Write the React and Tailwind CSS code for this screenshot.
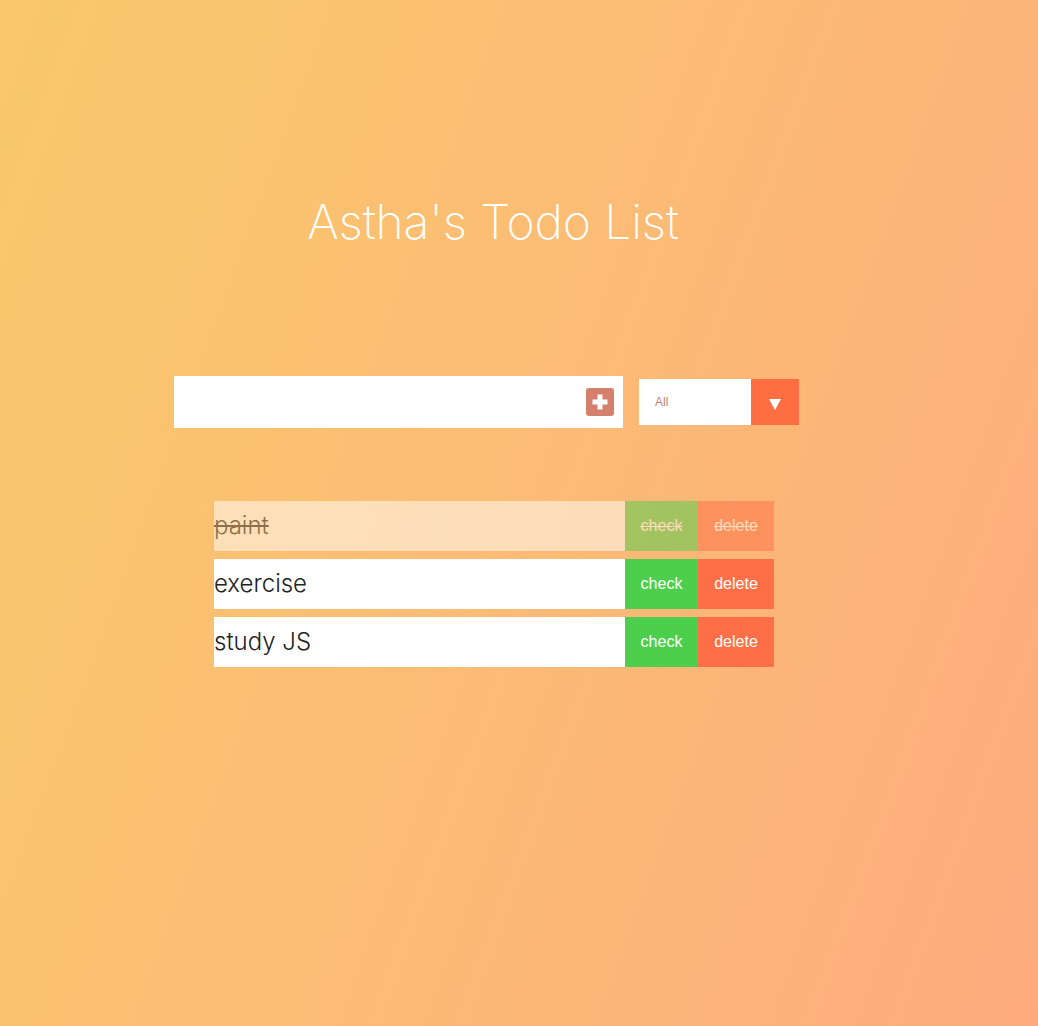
import { useState } from 'react';

const initialTodos = [
  { id: 1, text: 'paint', completed: true },
  { id: 2, text: 'exercise', completed: false },
  { id: 3, text: 'study JS', completed: false },
];

export default function App() {
  const [todos, setTodos] = useState(initialTodos);
  const [input, setInput] = useState('');

  const toggleTodo = (id) => {
    setTodos(todos.map((t) => (t.id === id ? { ...t, completed: !t.completed } : t)));
  };

  const deleteTodo = (id) => {
    setTodos(todos.filter((t) => t.id !== id));
  };

  const addTodo = (e) => {
    e.preventDefault();
    if (!input.trim()) return;
    setTodos([...todos, { id: Date.now(), text: input, completed: false }]);
    setInput('');
  };

  return (
    <div className="min-h-screen w-full bg-[linear-gradient(110deg,#f9c86a_0%,#fbbd74_45%,#fdab7d_100%)] font-['Inter',sans-serif]">
      <header className="pt-[192px] pb-[124px] text-center">
        <h1 className="text-[48px] font-extralight text-white leading-[60px] mr-[52px] tracking-[-0.1px]">
          Astha's Todo List
        </h1>
      </header>

      <form onSubmit={addTodo} className="flex items-center pl-[174px] gap-4">
        <div className="flex items-center h-[52px] w-[449px] bg-white">
          <input
            value={input}
            onChange={(e) => setInput(e.target.value)}
            className="flex-1 h-full px-3 outline-none text-[20px]"
          />
          <button
            type="submit"
            className="w-[28px] h-[28px] mr-[9px] rounded-[3px] bg-[#d4806c] flex items-center justify-center"
          >
            <svg width="18" height="18" viewBox="0 0 18 18">
              <rect x="6.5" y="1.5" width="5" height="15" fill="white" />
              <rect x="1.5" y="6.5" width="15" height="5" fill="white" />
            </svg>
          </button>
        </div>
        <div className="flex h-[46px] w-[160px] bg-white">
          <span className="flex-1 flex items-center pl-4 text-[12px] text-[#c98070] font-['Liberation_Sans',sans-serif]">
            All
          </span>
          <span className="w-[48px] bg-[#ff6e40] flex items-center justify-center pt-1">
            <svg width="12" height="12" viewBox="0 0 12 12">
              <path d="M0 1 L12 1 L6 12 Z" fill="white" />
            </svg>
          </span>
        </div>
      </form>

      <ul className="mt-[73px] ml-[214px] w-[560px] flex flex-col gap-[8px]">
        {todos.map((todo) => (
          <li
            key={todo.id}
            className={`flex h-[50px] ${todo.completed ? 'opacity-50' : ''}`}
          >
            <span
              className={`flex-1 bg-white flex items-center text-[24px] font-light text-[#222] ${
                todo.completed ? 'line-through' : ''
              }`}
            >
              {todo.text}
            </span>
            <button
              onClick={() => toggleTodo(todo.id)}
              className={`w-[73px] bg-[#4ccf4c] text-white text-[16px] font-['Liberation_Sans',sans-serif] ${
                todo.completed ? 'line-through' : ''
              }`}
            >
              check
            </button>
            <button
              onClick={() => deleteTodo(todo.id)}
              className={`w-[76px] bg-[#ff6f47] text-white text-[16px] font-['Liberation_Sans',sans-serif] ${
                todo.completed ? 'line-through' : ''
              }`}
            >
              delete
            </button>
          </li>
        ))}
      </ul>
    </div>
  );
}
